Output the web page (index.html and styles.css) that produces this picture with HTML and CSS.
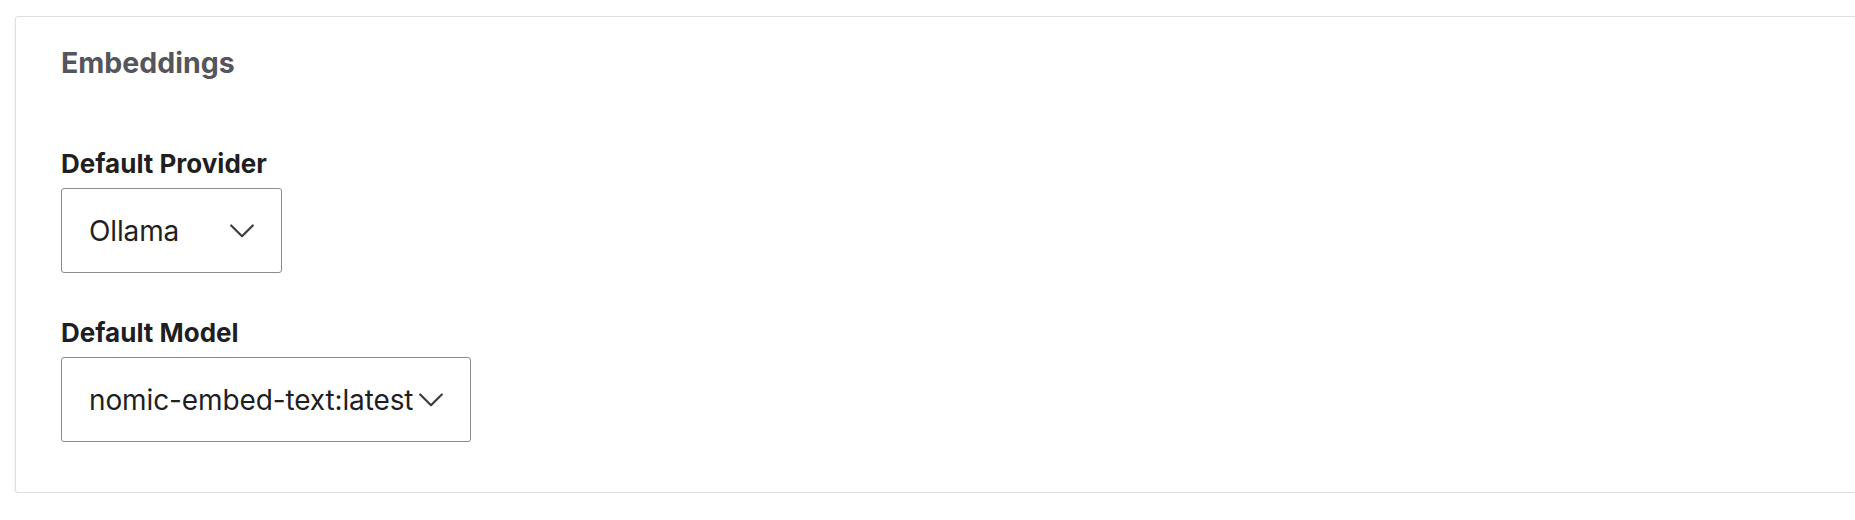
FILE: index.html
```html
<!DOCTYPE html>
<html lang="en">
<head>
    <meta charset="UTF-8">
    <meta name="viewport" content="width=device-width, initial-scale=1.0">
    <title>Embeddings</title>
    <link rel="stylesheet" href="styles.css">
</head>
<body>
    <div class="card">
        <h2 class="card-title">Embeddings</h2>

        <div class="field">
            <label class="field-label">Default Provider</label>
            <div class="select select-provider">
                <span class="select-value">Ollama</span>
                <svg class="chevron" width="24" height="14" viewBox="0 0 24 14"><path d="M1.2 1.5 L12 12.2 L22.8 1.5" /></svg>
            </div>
        </div>

        <div class="field">
            <label class="field-label">Default Model</label>
            <div class="select">
                <span class="select-value">nomic-embed-text:latest</span>
                <svg class="chevron" width="24" height="14" viewBox="0 0 24 14"><path d="M1.2 1.5 L12 12.2 L22.8 1.5" /></svg>
            </div>
        </div>
    </div>
</body>
</html>
```

FILE: styles.css
```css
html, body { margin: 0; padding: 0; overflow: hidden; }
body {
    font-family: Inter, "Noto Sans", sans-serif;
    background-color: #ffffff;
    color: #1f1f23;
}
.card {
    margin: 16px -30px 0 15px;
    padding: 28px 45px 50px;
    border: 1px solid #dedee3;
    border-radius: 3px;
    background-color: #ffffff;
    box-shadow: 0 2px 4px rgba(0, 0, 0, 0.07);
}
.card-title {
    margin: 0 0 68px;
    font-size: 28.5px;
    line-height: 35px;
    font-weight: 700;
    color: #55565b;
}
.field { margin-bottom: 44px; }
.field:last-child { margin-bottom: 0; }
.field-label {
    display: block;
    margin-bottom: 9px;
    font-size: 26px;
    line-height: 31px;
    font-weight: 700;
    color: #1f1f23;
}
.select {
    display: inline-flex;
    align-items: center;
    justify-content: space-between;
    gap: 6px;
    box-sizing: border-box;
    height: 85px;
    padding: 0 27px;
    border: 1.5px solid #8b8b90;
    border-radius: 3px;
    background-color: #ffffff;
}
.select-provider { width: 221px; }
.select-value {
    font-size: 28px;
    font-weight: 400;
    letter-spacing: -0.12px;
    color: #1f1f23;
    white-space: nowrap;
}
.chevron { flex-shrink: 0; }
.chevron path {
    fill: none;
    stroke: #3c3c41;
    stroke-width: 2.2;
    stroke-linecap: round;
    stroke-linejoin: round;
}
```
